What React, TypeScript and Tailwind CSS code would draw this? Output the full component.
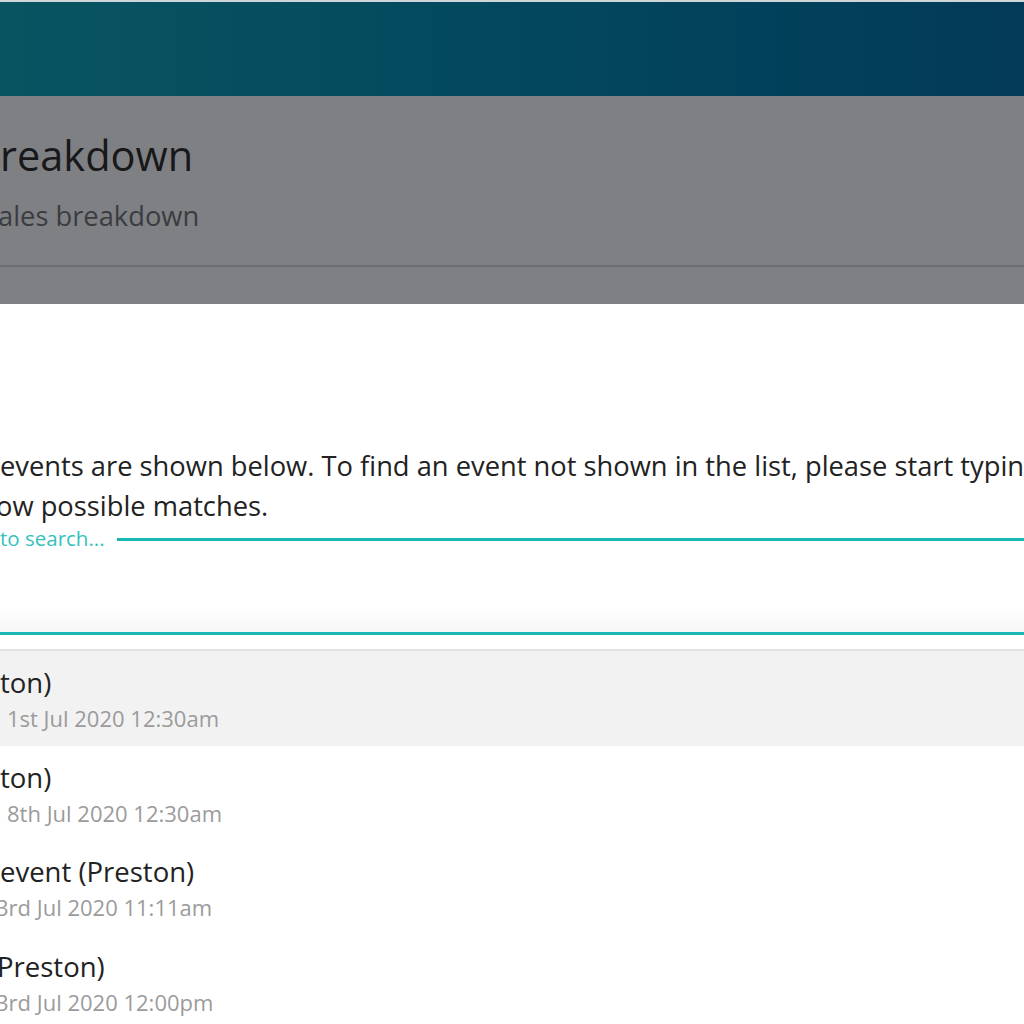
const events = [
  { title: 'ton)', date: '1st Jul 2020 12:30am', dateShift: 'pl-[7px]', titleShift: '', active: true },
  { title: 'ton)', date: '8th Jul 2020 12:30am', dateShift: 'pl-[7px]', titleShift: '', active: false },
  { title: 'event (Preston)', date: '3rd Jul 2020 11:11am', dateShift: '-ml-[4px]', titleShift: '', active: false },
  { title: 'Preston)', date: '3rd Jul 2020 12:00pm', dateShift: '-ml-[4px]', titleShift: '-ml-[3px]', active: false },
]

function EventRow({ title, date, dateShift, titleShift, active }: (typeof events)[number]) {
  return (
    <div className={`h-[94.5px] pt-[15px] ${active ? 'bg-[#f2f2f2]' : 'bg-white'}`}>
      <div className={`text-[27.5px] leading-[34px] text-[#222] whitespace-nowrap ${titleShift}`}>{title}</div>
      <div className={`mt-[3px] text-[22px] leading-[30px] text-[#9b9b9b] whitespace-nowrap ${dateShift}`}>{date}</div>
    </div>
  )
}

export default function App() {
  return (
    <div
      className="w-[1024px] h-[1024px] overflow-hidden bg-white flex flex-col"
      style={{ fontFamily: '"Open Sans", "Noto Sans", sans-serif' }}
    >
      {/* Top bar */}
      <div className="h-[96px] shrink-0 border-t-2 border-[#cfd6da] bg-gradient-to-r from-[#095461] via-[#03485e] to-[#023a57]" />

      {/* Dimmed page header */}
      <div className="h-[208px] shrink-0 flex flex-col bg-[#7f8084] pt-[35px]">
        <div className="text-[41.5px] leading-[48px] text-[#18181a] whitespace-nowrap">reakdown</div>
        <div className="mt-[19px] -ml-[2px] text-[27.3px] leading-[36px] text-[#3b3c3f] whitespace-nowrap">ales breakdown</div>
        <div className="mt-[31px] h-[2px] bg-[#6d6e72]" />
      </div>

      {/* Body */}
      <div className="flex flex-col pt-[142px]">
        <div className="text-[27.3px] leading-[40px] text-[#222]">
          <div className="whitespace-nowrap">
            events are shown below. To find an event not shown in the list, please start typing
          </div>
          <div className="whitespace-nowrap -ml-[4px]">ow possible matches.</div>
        </div>

        {/* Search field */}
        <div className="flex items-center">
          <span className="w-[105px] shrink-0 text-[20.5px] leading-[24px] text-[#35c2bb] whitespace-nowrap">
            to search...
          </span>
          <div className="ml-[12px] mt-[2px] h-[3px] flex-1 bg-[#17b7b3]" />
        </div>
        <div className="h-[82px] bg-gradient-to-b from-white from-70% to-[#f6f6f6]" />
        <div className="h-[3px] bg-[#17b7b3]" />

        <div className="h-[14px]" />
        <div className="h-[2px] bg-[#e2e2e2]" />

        {/* Event list */}
        <div className="flex flex-col">
          {events.map((e, i) => (
            <EventRow key={i} {...e} />
          ))}
        </div>
      </div>
    </div>
  )
}
